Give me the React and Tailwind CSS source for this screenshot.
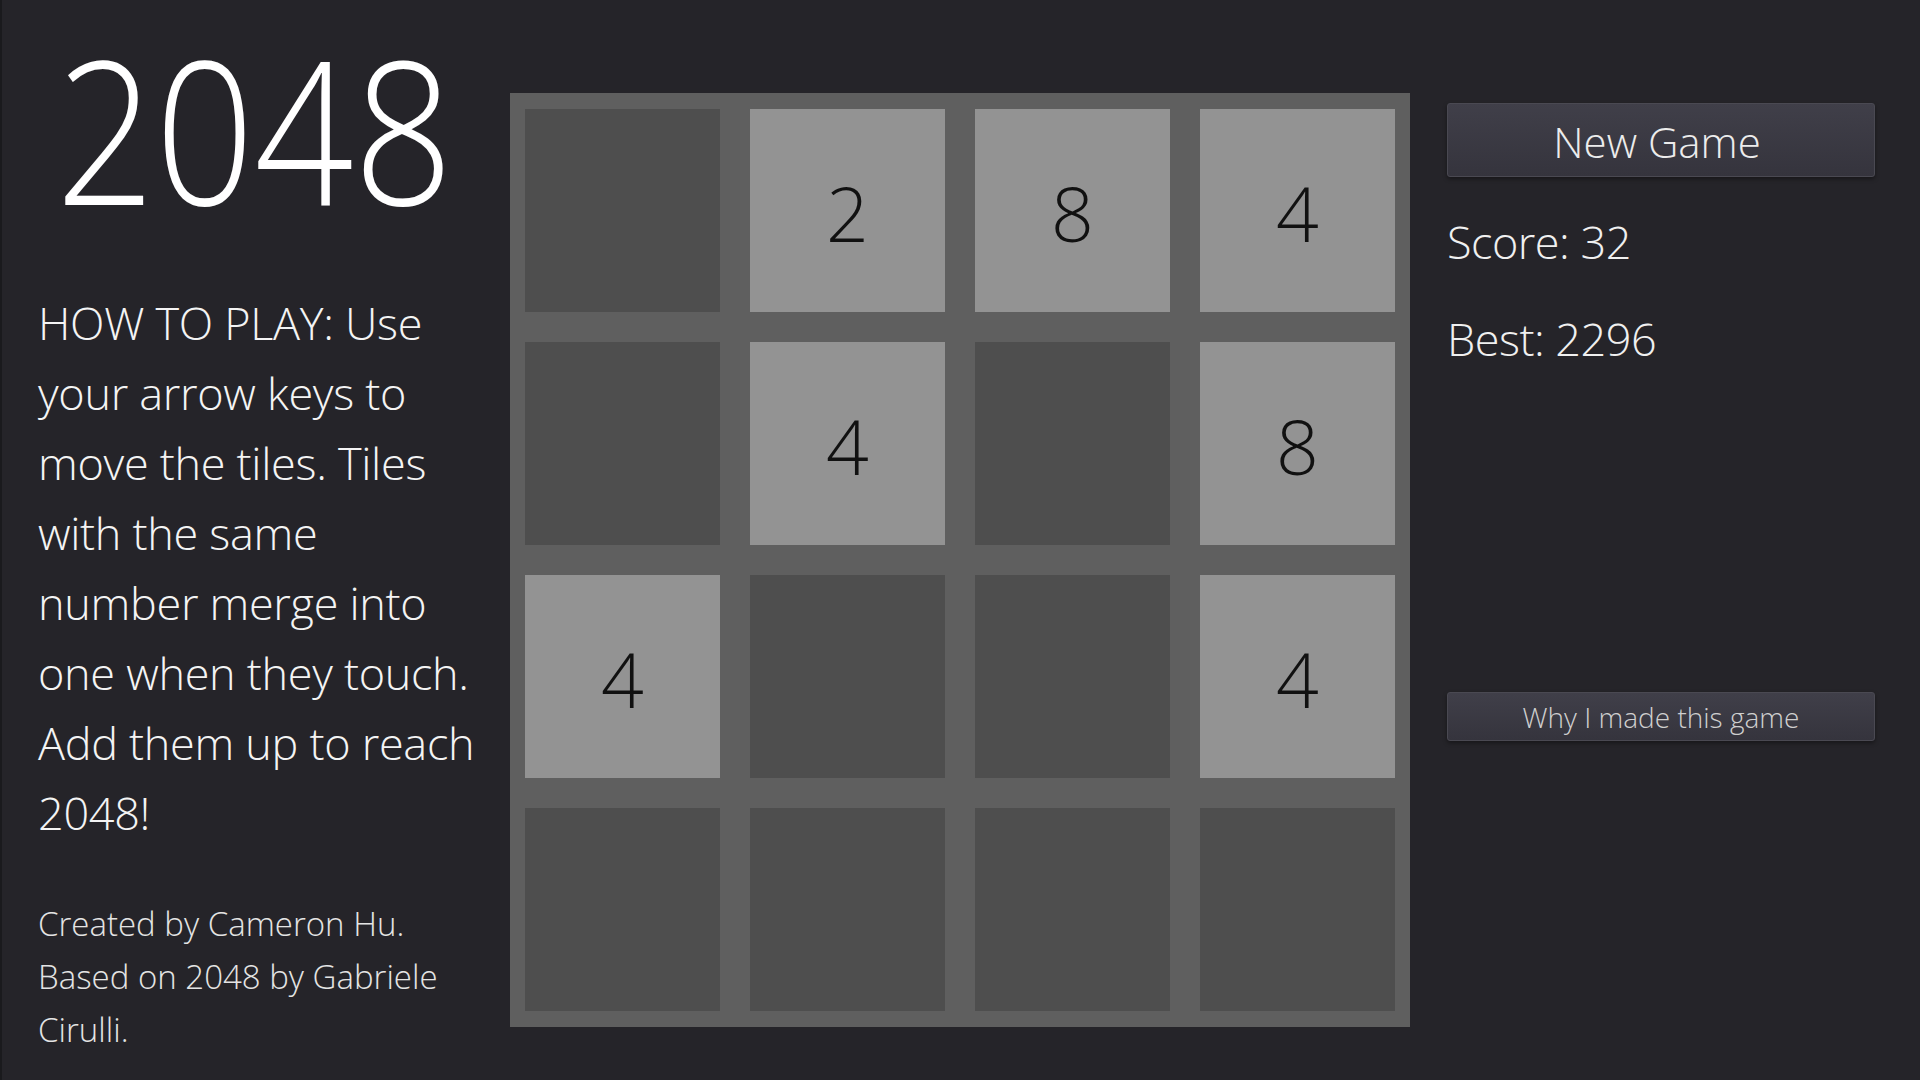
import React from 'react';

const board = [
    [0, 2, 8, 4],
    [0, 4, 0, 8],
    [4, 0, 0, 4],
    [0, 0, 0, 0]
];

const howTo = [
    'HOW TO PLAY: Use',
    'your arrow keys to',
    'move the tiles. Tiles',
    'with the same',
    'number merge into',
    'one when they touch.',
    'Add them up to reach',
    '2048!'
];

const Tile = ({ value }) => (
    <div className={`flex items-center justify-center ${value ? 'bg-[#939393]' : 'bg-[#4e4e4e]'}`}>
        {value ? <span className="text-[75px] font-light leading-none text-[#111] pt-[6px]">{value}</span> : null}
    </div>
);

const App = () => {
    return (
        <div
            className="w-[1920px] h-[1080px] bg-[#252429] border-l-2 border-[#1a1a1d] flex items-start overflow-hidden text-white"
            style={{ fontFamily: '"Open Sans", "Noto Sans", sans-serif' }}
        >
            {/* left column: title, help text, credits */}
            <div className="w-[508px] shrink-0 px-[36px]">
                <h1 className="-mx-[36px] mt-[8px] h-[240px] text-[200px] leading-[240px] font-light text-center text-white whitespace-nowrap">
                    <span className="inline-block scale-x-[0.87] mr-[4px]">2048</span>
                </h1>
                <div className="mt-[40px] text-[45px] leading-[70px] font-light tracking-[-0.3px] text-[#f4f4f4] whitespace-nowrap">
                    {howTo.map((line) => (
                        <div key={line}>{line}</div>
                    ))}
                </div>
                <div className="mt-[49px] text-[33px] leading-[53px] font-light text-[#e4e4e4] whitespace-nowrap">
                    <div>Created by Cameron Hu.</div>
                    <div>Based on 2048 by Gabriele</div>
                    <div>Cirulli.</div>
                </div>
            </div>

            {/* game board */}
            <div className="mt-[93px] shrink-0 w-[900px] h-[934px] bg-[#5f5f5f] px-[15px] py-[16px] grid grid-cols-[repeat(4,195px)] grid-rows-[repeat(4,203px)] gap-[30px]">
                {board.flat().map((v, i) => (
                    <Tile key={i} value={v} />
                ))}
            </div>

            {/* right column: controls and score */}
            <div className="ml-[37px] mt-[103px] w-[428px] shrink-0 flex flex-col">
                <button className="h-[74px] w-full rounded-[3px] border border-[#4a4952] bg-gradient-to-b from-[#403f49] to-[#35343d] shadow-[0_2px_4px_rgba(0,0,0,0.4)] text-[42px] font-light text-[#ececec] leading-none pt-[4px] pr-[8px]">
                    New Game
                </button>
                <div className="mt-[33px] text-[45px] leading-[64px] font-light tracking-[-0.5px] text-[#f0f0f0]">Score: 32</div>
                <div className="mt-[33px] text-[45px] leading-[64px] font-light tracking-[-0.5px] text-[#f0f0f0]">Best: 2296</div>
                <button className="mt-[321px] h-[49px] w-full rounded-[3px] border border-[#4a4952] bg-gradient-to-b from-[#403f49] to-[#35343d] shadow-[0_2px_4px_rgba(0,0,0,0.4)] text-[28px] font-light text-[#cfcfcf] leading-none">
                    Why I made this game
                </button>
            </div>
        </div>
    );
};

export default App;
